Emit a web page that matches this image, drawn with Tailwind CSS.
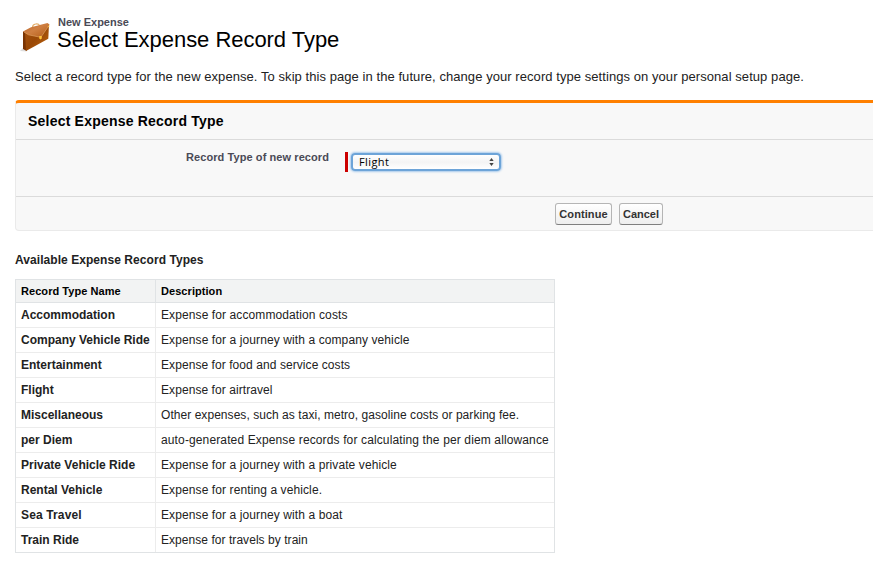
<!DOCTYPE html>
<html lang="en">
<head>
<meta charset="utf-8">
<title>Select Expense Record Type</title>
<script src="https://cdn.jsdelivr.net/npm/@tailwindcss/browser@4"></script>
</head>
<body class="h-[566px] overflow-hidden bg-white pl-[15px] font-['Liberation_Sans',Arial,sans-serif] text-[12px] text-[#222] whitespace-nowrap">
<header class="flex h-[68px] pt-[15px]">
  <svg class="mt-[5px] ml-[4px] h-[34px] w-[34px] shrink-0" viewBox="0 0 34 34">
    <defs>
      <linearGradient id="flap" x1="0" y1="0" x2="1" y2="1"><stop offset="0" stop-color="#b5622a"/><stop offset=".45" stop-color="#cf7f42"/><stop offset="1" stop-color="#b25a14"/></linearGradient>
      <linearGradient id="body" x1="0" y1="0" x2="1" y2="1"><stop offset="0" stop-color="#a85210"/><stop offset=".5" stop-color="#994806"/><stop offset="1" stop-color="#c2690f"/></linearGradient>
    </defs>
    <path d="M1 31 4 28 8 31.5Z" fill="#ddd"/>
    <path d="M13.5 7.5Q13.5 4.5 16.5 4Q19.5 3.3 20.5 5.5" fill="none" stroke="#e3ad68" stroke-width="1.2"/>
    <path d="M4 11.5 7.5 12.5 7.5 31 4 29Z" fill="#7a3403"/>
    <path d="M6 11 30 4 29.3 18.8 7 31Z" fill="url(#body)"/>
    <path d="M4 11.5 12 7.2 28.5 3 30.5 4.5 21.8 17.3 9.5 14.8Z" fill="url(#flap)"/>
    <path d="M5 12 9.5 14.8 21.8 17.3 30 5.5" fill="none" stroke="#e0a062" stroke-width=".7"/>
    <path d="M20.2 16h2.6v2.4l-1.3 1.2-1.3-1.2Z" fill="#ffc13a"/>
    <circle cx="29.5" cy="6.5" r=".8" fill="#f2b441"/>
  </svg>
  <div class="pl-[4px]">
    <div class="h-[13px] pl-[1px] text-[11px] leading-[14px] font-bold text-[#4a4a56]"><span>New Expense</span></div>
    <h1 class="text-[22px] leading-[24px] tracking-[-0.04px] text-black"><span>Select Expense Record Type</span></h1>
  </div>
</header>
<p class="h-[32px] text-[13px] leading-[18px] tracking-[0.064px] text-[#222]"><span>Select a record type for the new expense. To skip this page in the future, change your record type settings on your personal setup page.</span></p>
<section class="h-[131px] rounded-l-[4px] border-t-3 border-b border-l border-t-[#ff8000] border-b-[#eaeaea] border-l-[#eaeaea] bg-[#f8f8f8]">
  <h2 class="h-[37px] border-b border-[#dbdbdb] pl-[12px] text-[14px] leading-[36px] font-bold tracking-[0.21px] text-black"><span>Select Expense Record Type</span></h2>
  <div class="flex h-[57px] border-b border-[#dbdbdb]">
    <label class="w-[313px] pt-[10px] text-right text-[11px] leading-[14px] font-bold tracking-[0.08px] text-[#4a4a56]"><span>Record Type of new record</span></label>
    <div class="mt-[12px] ml-[16px] h-[20px] w-[3px] bg-[#c00]"></div>
    <div class="mt-[13px] ml-[3px] flex h-[18px] w-[150px] items-center justify-between rounded-[4px] border-2 border-[#6da4d8] bg-linear-to-b from-white via-[#f4f4f4] to-white pr-[5px] pl-[6px] font-['Open_Sans',sans-serif] text-[11px] tracking-[0.4px] text-black shadow-[0_0_2px_1px_#a9cbed]">
      <span>Flight</span>
      <svg class="h-[8px] w-[5px]" viewBox="0 0 5 8"><path d="M2.5 0 4.7 3H.3ZM2.5 8 .3 5h4.4Z" fill="#444"/></svg>
    </div>
  </div>
  <div class="flex gap-[7px] pt-[6px] pl-[539px]">
    <button class="h-[22px] w-[57px] rounded-[3px] border border-[#b5b5b5] border-b-[#7f7f7f] bg-linear-to-b from-white to-[#eee] text-[11px] font-bold tracking-[0.1px] text-[#333]"><span>Continue</span></button>
    <button class="h-[22px] w-[44px] rounded-[3px] border border-[#b5b5b5] border-b-[#7f7f7f] bg-linear-to-b from-white to-[#eee] text-[11px] font-bold text-[#333]"><span>Cancel</span></button>
  </div>
</section>
<h3 class="mt-[20px] h-[28px] leading-[18px] font-bold tracking-[0.06px]"><span>Available Expense Record Types</span></h3>
<table class="w-[540px] table-fixed border-separate border-spacing-0 border border-[#e0e3e5] text-left [&_td]:h-[25px] [&_td]:border-b [&_td]:border-[#ececec] [&_td]:p-0 [&_td]:pl-[5px] [&_td]:leading-[24px] [&_td:last-child]:tracking-[0.1px] [&_tr:last-child_td]:h-[24px] [&_tr:last-child_td]:border-b-0 [&_td:first-child]:border-r [&_td:first-child]:font-bold">
  <thead class="bg-[#f2f3f3] text-[11px] tracking-[0.06px] text-black">
    <tr><th class="h-[23px] w-[140px] border-r border-b border-[#e0e3e5] p-0 pl-[5px]"><span>Record Type Name</span></th><th class="h-[23px] border-b border-[#e0e3e5] p-0 pl-[5px]"><span>Description</span></th></tr>
  </thead>
  <tbody>
    <tr><td><span>Accommodation</span></td><td><span>Expense for accommodation costs</span></td></tr>
    <tr><td><span>Company Vehicle Ride</span></td><td><span>Expense for a journey with a company vehicle</span></td></tr>
    <tr><td><span>Entertainment</span></td><td><span class="tracking-[0.07px]">Expense for food and service costs</span></td></tr>
    <tr><td><span>Flight</span></td><td><span class="tracking-[0.07px]">Expense for airtravel</span></td></tr>
    <tr><td><span>Miscellaneous</span></td><td><span class="tracking-[0.05px]">Other expenses, such as taxi, metro, gasoline costs or parking fee.</span></td></tr>
    <tr><td><span>per Diem</span></td><td><span class="tracking-[0.13px]">auto-generated Expense records for calculating the per diem allowance</span></td></tr>
    <tr><td><span>Private Vehicle Ride</span></td><td><span>Expense for a journey with a private vehicle</span></td></tr>
    <tr><td><span>Rental Vehicle</span></td><td><span>Expense for renting a vehicle.</span></td></tr>
    <tr><td><span class="tracking-[0.14px]">Sea Travel</span></td><td><span>Expense for a journey with a boat</span></td></tr>
    <tr><td><span>Train Ride</span></td><td><span class="tracking-[0.05px]">Expense for travels by train</span></td></tr>
  </tbody>
</table>
</body>
</html>
